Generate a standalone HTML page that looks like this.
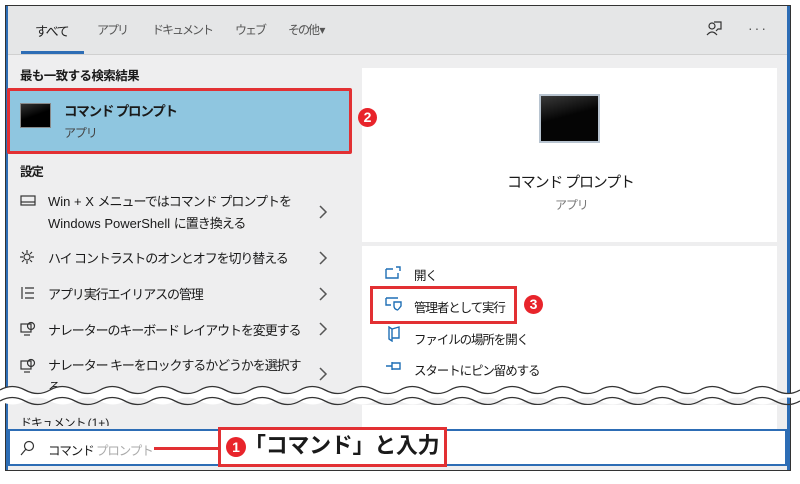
<!DOCTYPE html>
<html><head><meta charset="utf-8"><style>
*{margin:0;padding:0;box-sizing:border-box}
body{width:800px;height:484px;background:#fff;position:relative;overflow:hidden;font-family:"Liberation Sans","Noto Sans CJK JP",sans-serif;color:#1a1a1a}
.a{position:absolute}
.t{font-size:12.5px;white-space:nowrap;letter-spacing:-1.1px}
.l{letter-spacing:0}
.ico{stroke:#333;fill:none;stroke-width:1.2}
.bi{stroke:#1f6fb5;fill:none;stroke-width:1.4}
.num{width:19px;height:19px;border-radius:50%;background:#e8242b;color:#fff;font-weight:bold;font-size:14px;text-align:center;line-height:19px;z-index:5}
.tab{font-size:12px;letter-spacing:-2px;color:#555;white-space:nowrap}
</style></head><body>
<div class="a" style="left:5px;top:5px;width:786px;height:466px;border:1px solid #333;background:#eeeeef"></div>
<div class="a" style="left:6px;top:6px;width:2px;height:464px;background:#2d6db5"></div>
<div class="a" style="left:787px;top:6px;width:3px;height:464px;background:#2d6db5"></div>
<div class="a" style="left:8px;top:6px;width:779px;height:49px;background:#e5e6e7;border-bottom:1px solid #d0d0d0"></div>
<div class="a tab" style="left:35px;top:21px;color:#222;font-size:13px;letter-spacing:-1.5px">すべて</div>
<div class="a" style="left:21px;top:51px;width:63px;height:3px;background:#2d6db5"></div>
<div class="a tab" style="left:97px;top:21px">アプリ</div>
<div class="a tab" style="left:152px;top:21px">ドキュメント</div>
<div class="a tab" style="left:235px;top:21px">ウェブ</div>
<div class="a tab" style="left:288px;top:21px">その他 <span style="letter-spacing:0">▾</span></div>
<svg class="a" style="left:705px;top:20px" width="18" height="18"><circle cx="7" cy="6" r="3" class="ico"/><path d="M2 15q5-6 10 0M9 2h7v7h-3l-2 2" class="ico"/></svg>
<div class="a" style="left:748px;top:20px;color:#555;font-size:14px;letter-spacing:2px">···</div>
<div class="a t" style="left:20px;top:65px;font-weight:bold;letter-spacing:-0.6px">最も一致する検索結果</div>
<div class="a" style="left:7px;top:88px;width:345px;height:66px;background:#8fc6e0;border:3px solid #e23033;border-radius:2px"></div>
<div class="a" style="left:20px;top:103px;width:31px;height:25px;background:linear-gradient(160deg,#333,#000 50%);border:1px solid #888"></div>
<div class="a t" style="left:64px;top:100px;font-weight:bold;font-size:13.5px;letter-spacing:-1.2px">コマンド プロンプト</div>
<div class="a t" style="left:64px;top:124px;color:#444;font-size:12px">アプリ</div>
<div class="a t" style="left:20px;top:161px;font-weight:bold">設定</div>
<svg class="a" style="left:20px;top:195px" width="16" height="12"><rect x="1" y="1" width="14" height="9" class="ico"/><path d="M1 7h14" class="ico"/></svg>
<div class="a t" style="left:48px;top:191px;line-height:22px;font-size:13px;letter-spacing:-1px"><span class="l">Win + X </span>メニューではコマンド プロンプトを<br><span class="l">Windows PowerShell </span>に置き換える</div>
<svg class="a" style="left:318px;top:205px" width="10" height="14"><path d="M2 1l6 6-6 6" stroke="#555" fill="none" stroke-width="1.5"/></svg>
<svg class="a" style="left:19px;top:249px" width="16" height="16"><circle cx="8" cy="8" r="3" class="ico"/><path d="M8 1v3M8 12v3M1 8h3M12 8h3M3 3l2 2M11 11l2 2M13 3l-2 2M3 13l2-2" class="ico"/></svg>
<div class="a t" style="left:48px;top:248px;font-size:13px">ハイ コントラストのオンとオフを切り替える</div>
<svg class="a" style="left:318px;top:251px" width="10" height="14"><path d="M2 1l6 6-6 6" stroke="#555" fill="none" stroke-width="1.5"/></svg>
<svg class="a" style="left:20px;top:286px" width="16" height="14"><path d="M2 1v12M5 2h9M5 7h9M5 12h9" class="ico"/></svg>
<div class="a t" style="left:48px;top:284px;font-size:13px">アプリ実行エイリアスの管理</div>
<svg class="a" style="left:318px;top:287px" width="10" height="14"><path d="M2 1l6 6-6 6" stroke="#555" fill="none" stroke-width="1.5"/></svg>
<svg class="a" style="left:20px;top:321px" width="16" height="15"><rect x="1" y="3" width="10" height="8" class="ico"/><circle cx="11" cy="5" r="3.5" class="ico"/><path d="M4 14h6" class="ico"/></svg>
<div class="a t" style="left:48px;top:320px;font-size:13px">ナレーターのキーボード レイアウトを変更する</div>
<svg class="a" style="left:318px;top:322px" width="10" height="14"><path d="M2 1l6 6-6 6" stroke="#555" fill="none" stroke-width="1.5"/></svg>
<svg class="a" style="left:20px;top:358px" width="16" height="15"><rect x="1" y="3" width="10" height="8" class="ico"/><circle cx="11" cy="5" r="3.5" class="ico"/><path d="M4 14h6" class="ico"/></svg>
<div class="a t" style="left:48px;top:355px;line-height:22px;font-size:13px">ナレーター キーをロックするかどうかを選択す<br>る</div>
<svg class="a" style="left:318px;top:367px" width="10" height="14"><path d="M2 1l6 6-6 6" stroke="#555" fill="none" stroke-width="1.5"/></svg>
<div class="a" style="left:362px;top:68px;width:415px;height:174px;background:#fff"></div>
<div class="a" style="left:362px;top:246px;width:415px;height:150px;background:#fff"></div>
<div class="a num" style="left:358px;top:108px">2</div>
<div class="a" style="left:539px;top:94px;width:61px;height:49px;background:linear-gradient(165deg,#3a3a3a,#050505 45%);border:2px solid #b8c4d0"></div>
<div class="a t" style="left:507px;top:171px;font-size:15px;letter-spacing:-1.2px">コマンド プロンプト</div>
<div class="a t" style="left:555px;top:196px;color:#777;font-size:12px">アプリ</div>
<svg class="a" style="left:385px;top:266px" width="16" height="14"><path d="M1 3v9h12V7M1 3h7M11 1h4v4" class="bi"/></svg>
<div class="a t" style="left:414px;top:265px">開く</div>
<div class="a" style="left:370px;top:286px;width:147px;height:38px;border:3px solid #e23033;background:#fff"></div>
<svg class="a" style="left:385px;top:297px" width="18" height="14"><path d="M1 1h12M1 1v7h5M9 5h7v4q-3 4-3.5 4Q9 12 9 9z" class="bi"/></svg>
<div class="a t" style="left:414px;top:297px">管理者として実行</div>
<div class="a num" style="left:524px;top:295px">3</div>
<svg class="a" style="left:387px;top:326px" width="14" height="16"><path d="M2 1v12l3 2V3zM5 3l7-2v11H5" class="bi"/></svg>
<div class="a t" style="left:414px;top:329px">ファイルの場所を開く</div>
<svg class="a" style="left:385px;top:360px" width="18" height="12"><path d="M1 6h6M7 2v8M7 3h8v6H7" class="bi"/></svg>
<div class="a t" style="left:414px;top:360px">スタートにピン留めする</div>
<svg class="a" style="left:0;top:380px" width="800" height="30">
<path d="M0 10 Q12 3 25 10 T50 10 T75 10 T100 10 T125 10 T150 10 T175 10 T200 10 T225 10 T250 10 T275 10 T300 10 T325 10 T350 10 T375 10 T400 10 T425 10 T450 10 T475 10 T500 10 T525 10 T550 10 T575 10 T600 10 T625 10 T650 10 T675 10 T700 10 T725 10 T750 10 T775 10 T800 10 V21 Q787 14 775 21 T750 21 T725 21 T700 21 T675 21 T650 21 T625 21 T600 21 T575 21 T550 21 T525 21 T500 21 T475 21 T450 21 T425 21 T400 21 T375 21 T350 21 T325 21 T300 21 T275 21 T250 21 T225 21 T200 21 T175 21 T150 21 T125 21 T100 21 T75 21 T50 21 T25 21 T0 21Z" fill="#fff"/>
<path d="M0 10 Q12 3 25 10 T50 10 T75 10 T100 10 T125 10 T150 10 T175 10 T200 10 T225 10 T250 10 T275 10 T300 10 T325 10 T350 10 T375 10 T400 10 T425 10 T450 10 T475 10 T500 10 T525 10 T550 10 T575 10 T600 10 T625 10 T650 10 T675 10 T700 10 T725 10 T750 10 T775 10 T800 10" stroke="#333" fill="none" stroke-width="1.3"/>
<path d="M0 21 Q12 14 25 21 T50 21 T75 21 T100 21 T125 21 T150 21 T175 21 T200 21 T225 21 T250 21 T275 21 T300 21 T325 21 T350 21 T375 21 T400 21 T425 21 T450 21 T475 21 T500 21 T525 21 T550 21 T575 21 T600 21 T625 21 T650 21 T675 21 T700 21 T725 21 T750 21 T775 21 T800 21" stroke="#333" fill="none" stroke-width="1.3"/>
</svg>
<div class="a" style="left:362px;top:405px;width:415px;height:25px;background:#fff"></div>
<div class="a t" style="left:20px;top:414px;height:12px;overflow:hidden;font-size:12px">ドキュメント <span class="l">(1+)</span></div>
<div class="a" style="left:8px;top:429px;width:779px;height:37px;background:#fff;border:2px solid #2d6db5"></div>
<svg class="a" style="left:20px;top:440px" width="16" height="16"><circle cx="9" cy="6" r="4.5" class="ico"/><path d="M6 9l-5 6" class="ico"/></svg>
<div class="a t" style="left:48px;top:440px">コマンド <span style="color:#aaa">プロンプト</span></div>
<div class="a" style="left:154px;top:447px;width:66px;height:3px;background:#e23033"></div>
<div class="a" style="left:218px;top:427px;width:229px;height:40px;border:3px solid #e23033;background:#fff"></div>
<div class="a num" style="left:226px;top:437px;width:20px;height:20px;line-height:20px">1</div>
<div class="a" style="left:244px;top:431px;font-size:22px;font-weight:bold;white-space:nowrap;letter-spacing:-0.3px;line-height:30px">「コマンド」と入力</div>
</body></html>
